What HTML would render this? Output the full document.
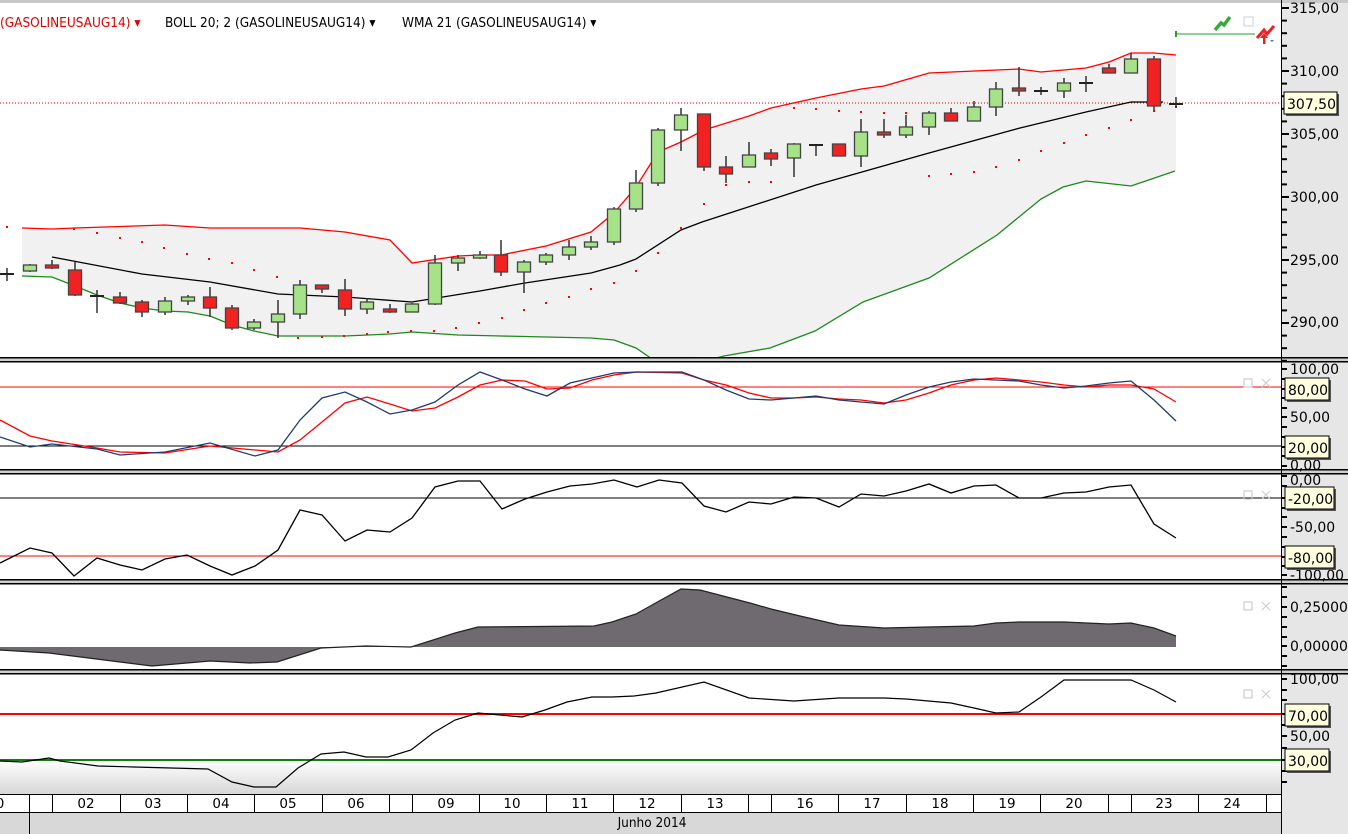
<!DOCTYPE html>
<html><head><meta charset="utf-8"><style>
html,body{margin:0;padding:0;background:#fff;}
body{width:1348px;height:834px;overflow:hidden;position:relative;font-family:"DejaVu Sans Condensed","Liberation Sans",sans-serif;}
svg{position:absolute;left:0;top:0;}
.ax{font-family:"DejaVu Sans","Liberation Sans",sans-serif;font-size:14px;fill:#000;}
.hd{font-family:"DejaVu Sans Condensed","Liberation Sans",sans-serif;font-size:13.5px;}
</style></head><body>
<svg id="s" width="1348" height="834" viewBox="0 0 1348 834" xmlns="http://www.w3.org/2000/svg">
<rect x="0" y="0" width="1348" height="834" fill="#fff"/>
<rect x="1281" y="0" width="67" height="834" fill="#e6e6e6"/>
<rect x="0" y="0" width="1348" height="3" fill="#c8c8c8"/>
<defs><linearGradient id="g1" x1="0" y1="0" x2="0" y2="1"><stop offset="0" stop-color="#fff"/><stop offset="1" stop-color="#d6d6d6"/></linearGradient></defs>
<rect x="0" y="760" width="1281" height="35" fill="url(#g1)"/>

<polygon fill="#f1f1f1" points="22,228 52,229 75,228 165,225 210,228 300,228 345,232 390,240 412,263 458,256 480,255 501,255 546,246 591,232 614,213 636,187 658,152 681,142 704,130 749,116 771,108 816,98 861,89 884,86 929,73 1019,69 1041,72 1086,68 1109,62 1131,53 1154,53 1176,55 1176,171 1131,186 1086,181 1063,187 1041,199 997,235 929,278 863,302 815,331 770,348 724,356 651,358 636,348 614,340 591,338 546,337 501,336 458,335 412,332 390,334 345,336 300,336 278,336 254,331 232,325 210,316 188,312 165,311 142,308 120,303 97,295 75,286 52,277 22,276"/>
<line x1="0" y1="103" x2="1281" y2="103" stroke="#d00" stroke-dasharray="1,2" stroke-width="1"/>
<polyline fill="none" stroke="#f00" stroke-width="1.3" points="22,228 52,229 75,228 165,225 210,228 300,228 345,232 390,240 412,263 458,256 480,255 501,255 546,246 591,232 614,213 636,187 658,152 681,142 704,130 749,116 771,108 816,98 861,89 884,86 929,73 1019,69 1041,72 1086,68 1109,62 1131,53 1154,53 1176,55"/>
<polyline fill="none" stroke="#1a8a1a" stroke-width="1.3" points="22,276 52,277 75,286 97,295 120,303 142,308 165,311 188,312 210,316 232,325 254,331 278,336 300,336 345,336 390,334 412,332 458,335 501,336 546,337 591,338 614,340 636,348 652,359"/>
<polyline fill="none" stroke="#1a8a1a" stroke-width="1.3" points="712,359 724,356 770,348 815,331 863,302 929,278 997,235 1041,199 1063,187 1086,181 1131,186 1175,171"/>
<polyline fill="none" stroke="#000" stroke-width="1.3" points="52,257 142,274 210,282 278,294 345,297 412,302 480,291 525,283 591,273 620,265 636,259 681,230 702,222 816,185 929,153 1020,128 1086,112 1131,102 1163,102"/>
<g id="dots" fill="#f00"></g>
<g id="candles"></g>
<line x1="1176" y1="34" x2="1255" y2="34" stroke="#2a9a2a" stroke-width="1"/>
<line x1="1176" y1="31" x2="1176" y2="37" stroke="#2a9a2a" stroke-width="2"/>
<path d="M1215,30 L1221,23 L1224,25 L1230,17" fill="none" stroke="#3aa83a" stroke-width="3.5"/>
<rect x="1244" y="17" width="9" height="9" fill="none" stroke="#c8d0dc"/>
<path d="M1257,38 L1264,30 L1267,34 L1274,26" fill="none" stroke="#e22" stroke-width="3"/>
<path d="M1260,38 L1264,33 L1268,38 Z M1263,38 h2.5 v6 h-2.5z" fill="#e22"/>
<path d="M1270,40 h4 l-2,2z" fill="#3a7ad8"/>

<g fill="#000">
<rect x="0" y="357" width="1348" height="1.5"/><rect x="0" y="358.5" width="1348" height="2.5" fill="#cfcfcf"/><rect x="0" y="361" width="1348" height="1.5"/>
<rect x="0" y="469" width="1348" height="1.5"/><rect x="0" y="470.5" width="1348" height="2.5" fill="#cfcfcf"/><rect x="0" y="473" width="1348" height="1.5"/>
<rect x="0" y="579" width="1348" height="1.5"/><rect x="0" y="580.5" width="1348" height="2.5" fill="#cfcfcf"/><rect x="0" y="583" width="1348" height="1.5"/>
<rect x="0" y="669" width="1348" height="1.5"/><rect x="0" y="670.5" width="1348" height="2.5" fill="#cfcfcf"/><rect x="0" y="673" width="1348" height="1.5"/>
</g>

<line x1="0" y1="387" x2="1281" y2="387" stroke="#f00" stroke-width="1"/>
<line x1="0" y1="446" x2="1281" y2="446" stroke="#000" stroke-width="1"/>
<polyline fill="none" stroke="#f00" stroke-width="1.3" points="0,420 30,436 52,441 97,448 120,452 165,453 210,446 278,452 300,440 322,422 345,403 367,397 390,404 412,411 435,408 458,397 480,385 502,380 525,381 547,389 570,388 592,380 614,375 637,372 682,373 704,380 726,385 749,393 771,398 794,398 816,397 839,399 861,400 884,403 906,400 929,393 951,385 974,380 996,378 1019,380 1041,382 1064,385 1086,387 1109,385 1131,385 1154,389 1176,402"/>
<polyline fill="none" stroke="#1f3c6c" stroke-width="1.3" points="0,437 30,447 52,444 97,449 120,455 165,452 210,443 255,456 278,450 300,420 322,398 345,392 367,402 390,414 412,410 435,402 458,385 480,372 502,380 525,389 547,396 570,383 592,378 614,373 637,372 682,372 704,380 726,390 749,399 771,400 794,398 816,396 839,400 861,402 884,404 906,395 929,387 951,382 974,379 996,380 1019,381 1041,385 1064,388 1086,386 1109,383 1131,381 1154,400 1176,421"/>

<line x1="0" y1="498" x2="1281" y2="498" stroke="#000" stroke-width="1"/>
<line x1="0" y1="556" x2="1281" y2="556" stroke="#f00" stroke-width="1"/>
<polyline fill="none" stroke="#000" stroke-width="1.3" points="0,563 30,548 52,553 74,576 97,558 120,565 142,570 165,559 187,555 210,566 232,575 255,566 278,550 300,510 322,515 345,541 367,530 390,532 412,518 435,487 458,481 480,481 502,509 525,499 547,492 570,486 592,484 614,480 637,487 659,480 682,483 704,506 726,512 749,502 771,504 794,497 816,498 839,507 861,494 884,496 906,491 929,484 951,493 974,486 996,485 1019,498 1041,498 1064,493 1086,492 1109,487 1131,485 1154,524 1176,538"/>

<polygon fill="#6e6a70" points="0,647 0,650 49,653 152,666 210,661 250,663 277,662 321,648 366,646 411,647 455,633 478,627 594,626 612,622 636,614 661,600 681,589 700,590 750,603 771,609 800,616 839,625 884,628 929,627 974,626 996,623 1019,622 1064,622 1109,624 1131,623 1154,628 1176,636 1176,647"/>
<polyline fill="none" stroke="#222" stroke-width="1.2" points="0,650 49,653 152,666 210,661 250,663 277,662 321,648 366,646 411,647 455,633 478,627 594,626 612,622 636,614 661,600 681,589 700,590 750,603 771,609 800,616 839,625 884,628 929,627 974,626 996,623 1019,622 1064,622 1109,624 1131,623 1154,628 1176,636"/>

<line x1="0" y1="714" x2="1281" y2="714" stroke="#f00" stroke-width="2"/>
<line x1="0" y1="760" x2="1281" y2="760" stroke="#108010" stroke-width="2"/>
<polyline fill="none" stroke="#000" stroke-width="1.2" points="0,761 22,762 49,758 60,761 98,766 134,767 208,769 232,782 254,787 276,787 298,768 321,754 344,752 366,757 388,757 411,750 433,733 455,720 478,713 500,715 522,717 545,710 567,702 592,697 612,697 634,696 656,693 704,682 749,698 794,701 839,698 884,698 906,699 951,703 974,708 996,713 1019,712 1041,697 1064,680 1109,680 1131,680 1154,690 1176,702"/>

<g stroke="#c9cfd8" fill="none" stroke-width="1.2">
<rect x="1244" y="379" width="8" height="8"/><path d="M1262,379 l8,8 M1270,379 l-8,8"/>
<rect x="1244" y="491" width="8" height="8"/><path d="M1262,491 l8,8 M1270,491 l-8,8"/>
<rect x="1244" y="602" width="8" height="8"/><path d="M1262,602 l8,8 M1270,602 l-8,8"/>
<rect x="1244" y="690" width="8" height="8"/><path d="M1262,690 l8,8 M1270,690 l-8,8"/>
</g>

<rect x="0" y="795" width="1281" height="18" fill="#fff"/>
<rect x="0" y="813" width="1281" height="21" fill="#d8d8d8"/>
<line x1="0" y1="794.5" x2="1281" y2="794.5" stroke="#000"/>
<line x1="0" y1="812.5" x2="1281" y2="812.5" stroke="#000"/>
<line x1="29.5" y1="813" x2="29.5" y2="834" stroke="#000"/>
<g stroke="#000" id="seps"></g>
<g class="ax" text-anchor="middle" style="font-size:13.5px">
<text x="0" y="808">0</text>
<text x="86" y="808">02</text><text x="153" y="808">03</text><text x="221" y="808">04</text><text x="288" y="808">05</text><text x="356" y="808">06</text>
<text x="446" y="808">09</text><text x="512" y="808">10</text><text x="580" y="808">11</text><text x="647" y="808">12</text><text x="715" y="808">13</text>
<text x="805" y="808">16</text><text x="872" y="808">17</text><text x="940" y="808">18</text><text x="1007" y="808">19</text><text x="1074" y="808">20</text>
<text x="1164" y="808">23</text><text x="1232" y="808">24</text>
<text x="652" y="827" class="hd">Junho 2014</text>
</g>

<line x1="1281.5" y1="0" x2="1281.5" y2="834" stroke="#000"/>
<g id="ticks" fill="#000"></g>
<g class="ax">
<text x="1290" y="13">315,00</text><text x="1290" y="76">310,00</text><text x="1290" y="139">305,00</text><text x="1290" y="202">300,00</text><text x="1290" y="265">295,00</text><text x="1290" y="327">290,00</text>
<text x="1290" y="374">100,00</text><text x="1290" y="422">50,00</text><text x="1290" y="470">0,00</text>
<text x="1290" y="485">0,00</text><text x="1290" y="532">-50,00</text><text x="1290" y="580">-100,00</text>
<text x="1290" y="612">0,25000</text><text x="1290" y="651">0,00000</text>
<text x="1290" y="684">100,00</text><text x="1290" y="741">50,00</text>
</g>
<g id="boxes"></g>
<g class="hd">
<text x="0" y="27" fill="#e00000">(GASOLINEUSAUG14) ▾</text>
<text x="165" y="27" fill="#000">BOLL 20; 2 (GASOLINEUSAUG14) ▾</text>
<text x="402" y="27" fill="#000">WMA 21 (GASOLINEUSAUG14) ▾</text>
</g>
</svg>
<script>
var NS="http://www.w3.org/2000/svg";
function el(p,t,a){var e=document.createElementNS(NS,t);for(var k in a)e.setAttribute(k,a[k]);p.appendChild(e);return e;}
var C=[[7,274,274,268,281,'d'],[30,265,271,264,272,'g'],[52,265,268,260,269,'r'],[75,270,295,262,296,'r'],[97,296,296,290,313,'d'],[120,297,303,292,304,'r'],[142,302,312,300,317,'r'],[165,301,312,297,315,'g'],[188,297,301,295,305,'g'],[210,297,308,287,317,'r'],[232,308,328,305,330,'r'],[254,322,328,319,330,'g'],[278,314,322,300,338,'g'],[300,285,314,280,319,'g'],[322,285,289,285,293,'r'],[345,290,309,279,316,'r'],[367,302,309,298,314,'g'],[390,309,312,304,313,'r'],[412,304,312,303,312,'g'],[435,263,304,255,305,'g'],[458,258,263,255,271,'g'],[480,255,258,251,259,'g'],[501,255,272,240,276,'r'],[524,262,272,260,293,'g'],[546,255,262,253,265,'g'],[569,247,255,240,260,'g'],[591,242,247,236,250,'g'],[614,209,242,207,245,'g'],[636,183,209,170,212,'g'],[658,130,183,128,186,'g'],[681,115,130,108,151,'g'],[704,114,167,114,171,'r'],[726,167,174,156,183,'r'],[749,155,167,142,167,'g'],[771,153,159,149,166,'r'],[794,144,158,143,177,'g'],[816,145,145,145,156,'d'],[839,144,156,144,156,'r'],[861,132,156,119,167,'g'],[884,132,134,119,138,'r'],[906,127,135,115,138,'g'],[929,113,127,111,135,'g'],[951,113,121,108,121,'r'],[974,107,121,101,121,'g'],[996,89,107,82,116,'g'],[1019,88,91,67,96,'r'],[1041,91,91,87,95,'d'],[1064,83,91,78,98,'g'],[1086,83,83,76,92,'d'],[1109,68,73,64,73,'r'],[1131,59,73,53,73,'g'],[1154,59,106,56,110,'r'],[1176,104,104,97,107,'d']];
var g=document.getElementById('candles');
C.forEach(function(c){
 el(g,'line',{x1:c[0],x2:c[0],y1:c[3],y2:c[4],stroke:'#333','stroke-width':1.5});
 if(c[5]=='d'){el(g,'line',{x1:c[0]-7,x2:c[0]+7,y1:c[1],y2:c[1],stroke:'#222','stroke-width':2});}
 else el(g,'rect',{x:c[0]-6.5,y:c[1],width:13,height:Math.max(c[2]-c[1],3),fill:c[5]=='g'?'#a6e388':'#f22222',stroke:'#444','stroke-width':1.3});
});
var D=[[7,227],[74,229],[97,233],[120,238],[142,242],[164,248],[187,254],[209,259],[232,263],[254,270],[277,277],[298,338],[322,337],[344,336],[367,334],[388,332],[411,331],[434,331],[456,328],[479,323],[502,318],[524,310],[546,303],[569,297],[591,289],[614,283],[636,271],[658,253],[681,228],[704,204],[726,185],[749,182],[771,182],[794,108],[816,109],[839,111],[861,112],[884,113],[906,113],[929,176],[951,174],[974,172],[996,167],[1019,160],[1041,151],[1064,143],[1086,135],[1109,128],[1131,120],[1154,111],[1176,107]];
var d=document.getElementById('dots');
D.forEach(function(p){el(d,'rect',{x:p[0]-1,y:p[1]-1,width:2,height:2});});
var s=document.getElementById('seps');
[29,52,120,187,254,322,389,412,479,546,613,681,748,771,838,906,973,1040,1108,1131,1198,1266].forEach(function(x){el(s,'line',{x1:x+.5,x2:x+.5,y1:795,y2:812});});
var t=document.getElementById('ticks');
for(var p=287;p<=315;p++){var y=8+(315-p)*12.6;el(t,'rect',{x:1281,y:y-1,width:(p%5==0)?8:6,height:2});}
[369,379,389,398,408,417,427,437,447,456,466,476,486,498,508,517,527,537,547,557,566,575,587,597,607,617,627,637,646,656,666,679,690,700,714,725,736,748,760,771,782].forEach(function(y){el(t,'rect',{x:1281,y:y-1,width:6,height:2});});
var b=document.getElementById('boxes');
function box(x,y,w,txt){el(b,'rect',{x:x+2,y:y+2,width:w,height:22,fill:'#555'});el(b,'rect',{x:x,y:y,width:w,height:22,fill:'#ffffe0',stroke:'#000'});var e=el(b,'text',{x:x+3,y:y+17,'class':'ax'});e.textContent=txt;}
box(1284,92,53,'307,50');box(1285,378,44,'80,00');box(1285,436,44,'20,00');box(1285,487,49,'-20,00');box(1285,546,49,'-80,00');box(1285,704,44,'70,00');box(1285,749,44,'30,00');
</script>
</body></html>
